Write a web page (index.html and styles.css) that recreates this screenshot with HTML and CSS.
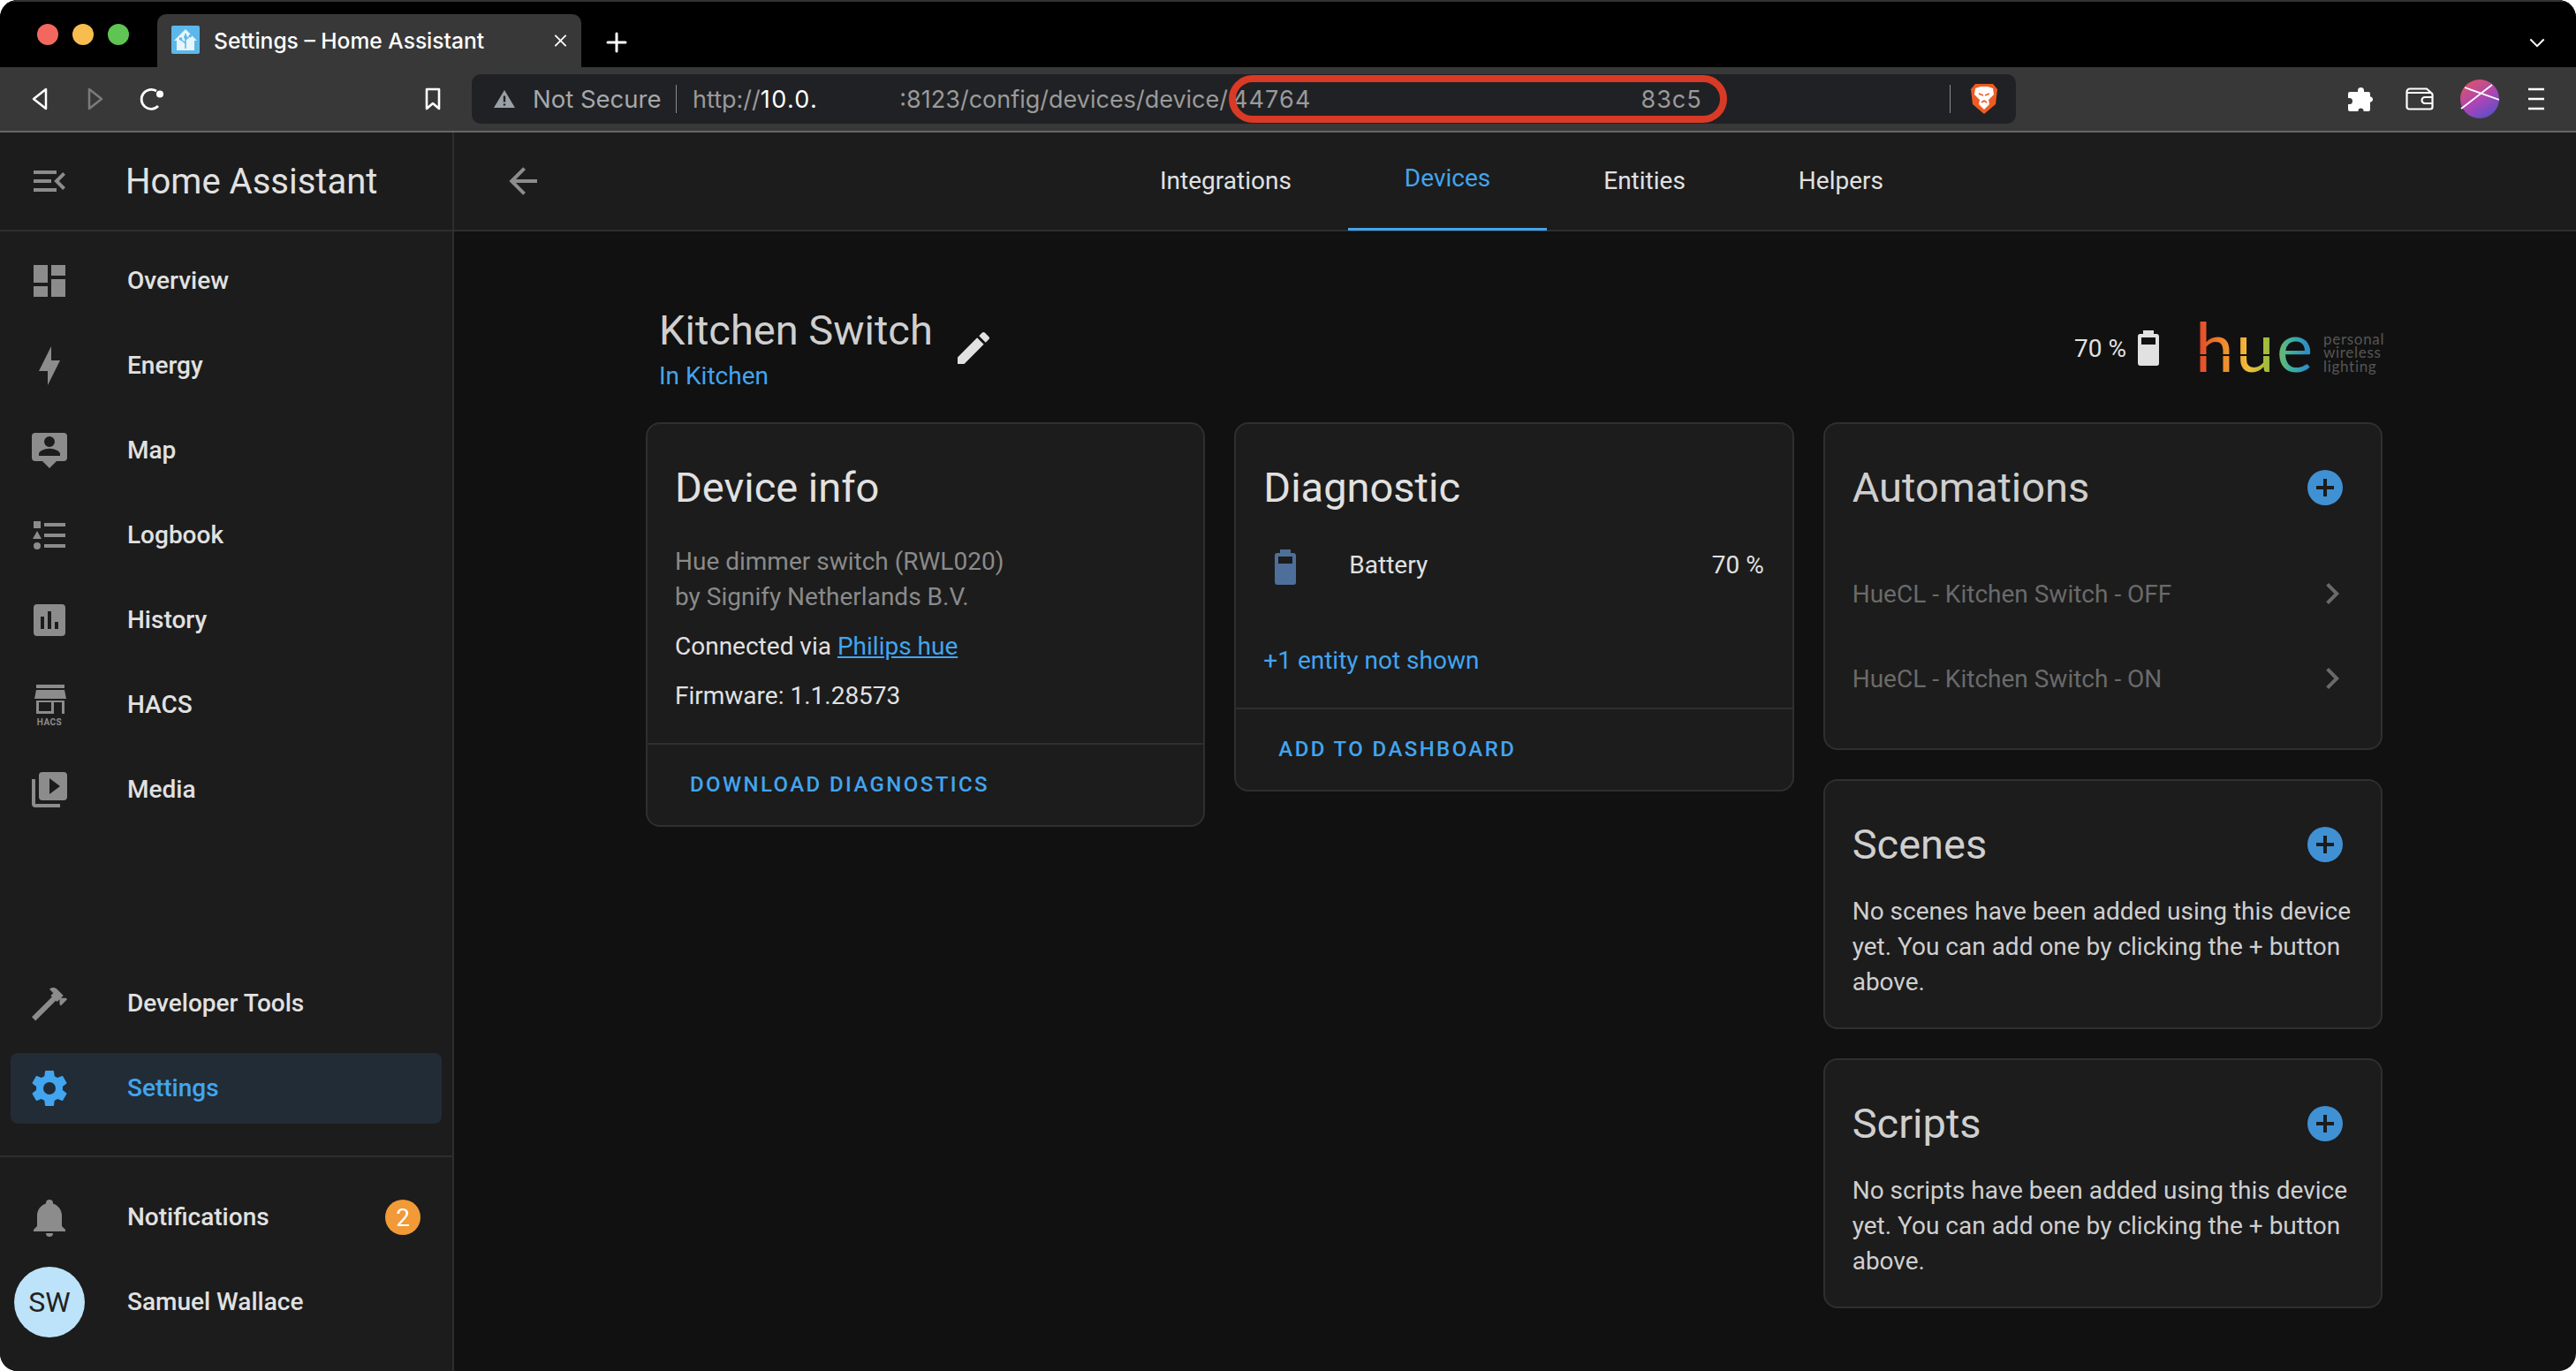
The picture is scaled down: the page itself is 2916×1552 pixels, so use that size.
FILE: index.html
```html
<!DOCTYPE html>
<html lang="en">
<head>
<meta charset="utf-8">
<title>Settings – Home Assistant</title>
<link rel="stylesheet" href="styles.css">
</head>
<body>
<div class="window">
  <div class="tabstrip">
    <div class="lights"><i class="light red"></i><i class="light yellow"></i><i class="light green"></i></div>
    <div class="tab">
      <svg class="favicon" viewBox="0 0 32 32"><rect width="32" height="32" rx="2" fill="#5cb8ea"/><path d="M16 4L29 17h-3v11H6V17H3z" fill="#e8f5fc"/><path d="M16 9v17M16 20l-5-4M16 16l5-4" stroke="#5cb8ea" stroke-width="1.6" fill="none"/><circle cx="16" cy="13" r="2" fill="#5cb8ea"/><circle cx="10.500" cy="15" r="1.800" fill="#5cb8ea"/><circle cx="21.500" cy="11.500" r="1.800" fill="#5cb8ea"/></svg>
      <span class="tab-title">Settings – Home Assistant</span>
      <svg class="tab-close" viewBox="0 0 16 16"><path d="M2 2L14 14M14 2L2 14" stroke="#fff" stroke-width="2" stroke-linecap="round"/></svg>
    </div>
    <svg class="tab-new" viewBox="0 0 24 24"><path d="M12 2V22M2 12H22" stroke="#fff" stroke-width="3" stroke-linecap="round"/></svg>
    <svg class="tab-list" viewBox="0 0 20 12"><path d="M1.500 1.500L10 10L18.500 1.500" stroke="#fff" stroke-width="2.200" fill="none"/></svg>
  </div>

  <div class="toolbar">
    <svg class="tb-back" viewBox="0 0 20 26"><path d="M17 2V24L3 13Z" stroke="#fff" stroke-width="2.500" fill="none" stroke-linejoin="round"/></svg>
    <svg class="tb-forward" viewBox="0 0 20 26"><path d="M3 2V24L17 13Z" stroke="#7b7b7b" stroke-width="2.500" fill="none" stroke-linejoin="round"/></svg>
    <svg class="tb-reload" viewBox="0 0 28 26"><path d="M21 21A11 11 0 1 1 19 4" stroke="#fff" stroke-width="2.800" fill="none"/><path d="M24 11.500A4 4 0 1 0 24 3.500A4 4 0 1 0 24 11.500Z" fill="#fff" transform="translate(-1 0)"/></svg>
    <svg class="tb-bookmark" viewBox="0 0 20 26"><path d="M3 2H17V24L10 18L3 24Z" stroke="#fff" stroke-width="2.600" fill="none" stroke-linejoin="round"/></svg>
    <div class="omnibox">
      <svg class="warn" viewBox="0 0 26 22"><path d="M13 1L25 21H1Z" fill="#9aa0a6"/><path d="M13 7.500V14.500M13 16.500V18.500" stroke="#202124" stroke-width="2.400"/></svg>
      <span class="not-secure">Not Secure</span>
      <i class="omni-sep"></i>
      <span class="url"><span class="url-dim">http://</span><span class="url-host">10.0.</span><span class="url-dim url-port">:8123/config/devices/device/</span><span class="url-dim url-id">44764</span><span class="url-dim url-id2">83c5</span></span>
      <i class="omni-sep omni-sep-right"></i>
      <svg class="brave" viewBox="0 0 32 36"><path d="M6 1H26L31 7L29 24L16 35L3 24L1 7Z" fill="#ee5c25"/><path d="M6 6L12 4H20L26 6L27 13L21 19L22 24L16 30L10 24L11 19L5 13Z" fill="#fff"/><path d="M10 12L15 14M22 12L17 14M13 22L16 20L19 22" stroke="#ee5c25" stroke-width="1.600" fill="none"/></svg>
      <div class="annotation"></div>
    </div>
    <svg class="tb-puzzle" viewBox="0 0 30 28"><path d="M12 6V4.500A3.500 3.500 0 0 1 19 4.500V6H24A2 2 0 0 1 26 8V11.500H27A3.200 3.200 0 0 1 27 17.500H26V26A2 2 0 0 1 24 28H18.500V26.500A3.200 3.200 0 0 0 12.500 26.500V28H3A2 2 0 0 1 1 26V20H2.500A3.500 3.500 0 0 0 2.500 13H1V8A2 2 0 0 1 3 6Z" fill="#fff"/></svg>
    <svg class="tb-wallet" viewBox="0 0 32 26"><path d="M5 1.500H24L29 6A2.500 2.500 0 0 1 30.500 8V22A2.500 2.500 0 0 1 28 24.500H4A2.500 2.500 0 0 1 1.500 22V5A3.500 3.500 0 0 1 5 1.500ZM2 6H28M30 11H22A3.500 3.500 0 0 0 22 18H30" stroke="#fff" stroke-width="2.200" fill="none"/></svg>
    <svg class="tb-avatar" viewBox="0 0 44 44">
      <defs><linearGradient id="avatarGrad" x1="0.200" y1="0" x2="0.800" y2="1"><stop offset="0" stop-color="#dd5468"/><stop offset="0.550" stop-color="#a845b8"/><stop offset="1" stop-color="#5350c8"/></linearGradient></defs>
      <circle cx="22" cy="22" r="22" fill="url(#avatarGrad)"/>
      <path d="M5 9L44 23M36 6L1 33" stroke="#fff" stroke-width="1.800" fill="none"/>
    </svg>
    <svg class="tb-menu" viewBox="0 0 18 26"><path d="M0 2H18M0 13H18M0 24H18" stroke="#fff" stroke-width="2.600"/></svg>
  </div>

  <div class="app">
    <aside class="sidebar">
      <div class="side-head">
        <svg class="icon" viewBox="0 0 24 24"><path d="M21,15.61L19.59,17L14.58,12L19.59,7L21,8.39L17.44,12L21,15.61M3,6H16V8H3V6M3,13V11H13V13H3M3,18V16H16V18H3Z"/></svg>
        <span class="side-title">Home Assistant</span>
      </div>
      <nav class="nav">
        <a class="item"><svg class="icon" viewBox="0 0 24 24"><path d="M13,3V9H21V3M13,21H21V11H13M3,21H11V15H3M3,13H11V3H3V13Z"/></svg><span class="item-label">Overview</span></a>
        <a class="item"><svg class="icon" viewBox="0 0 24 24"><path d="M11 15H6L13 1V9H18L11 23V15Z"/></svg><span class="item-label">Energy</span></a>
        <a class="item"><svg class="icon" viewBox="0 0 24 24"><path fill-rule="evenodd" d="M4 2H20A2 2 0 0 1 22 4V16A2 2 0 0 1 20 18H16L12 22L8 18H4A2 2 0 0 1 2 16V4A2 2 0 0 1 4 2ZM12 4A3 3 0 0 0 9 7A3 3 0 0 0 12 10A3 3 0 0 0 15 7A3 3 0 0 0 12 4ZM18 15V14C18 12 14 10.900 12 10.900C10 10.900 6 12 6 14V15H18Z"/></svg><span class="item-label">Map</span></a>
        <a class="item"><svg class="icon" viewBox="0 0 24 24"><path d="M5,9.5L7.5,14H2.5L5,9.5M3,4H7V8H3V4M5,20A2,2 0 0,0 7,18A2,2 0 0,0 5,16A2,2 0 0,0 3,18A2,2 0 0,0 5,20M9,5V7H21V5H9M9,19H21V17H9V19M9,13H21V11H9V13Z"/></svg><span class="item-label">Logbook</span></a>
        <a class="item"><svg class="icon" viewBox="0 0 24 24"><path d="M19,3H5A2,2 0 0,0 3,5V19A2,2 0 0,0 5,21H19A2,2 0 0,0 21,19V5A2,2 0 0,0 19,3M9,17H7V10H9V17M13,17H11V7H13V17M17,17H15V13H17V17Z"/></svg><span class="item-label">History</span></a>
        <a class="item"><svg class="icon" viewBox="0 0 48 48"><path d="M9 1H41V5H9ZM9 7H41L43 17H7Z"/><path d="M9 19H41V34H38V21H29V34H9ZM12 21V31H26V21Z" fill-rule="evenodd"/><text class="hacs-glyph" x="24" y="47" text-anchor="middle">HACS</text></svg><span class="item-label">HACS</span></a>
        <a class="item"><svg class="icon" viewBox="0 0 24 24"><path fill-rule="evenodd" d="M4,6H2V20A2,2 0 0,0 4,22H18V20H4V6M20,2H8A2,2 0 0,0 6,4V16A2,2 0 0,0 8,18H20A2,2 0 0,0 22,16V4A2,2 0 0,0 20,2M12,14.5V5.5L18,10L12,14.5Z"/></svg><span class="item-label">Media</span></a>
        <div class="nav-spacer"></div>
        <a class="item"><svg class="icon" viewBox="0 0 24 24"><path d="M2 19.63L13.43 8.2L12.72 7.5L14.14 6.07L12 3.89C13.2 2.7 15.09 2.7 16.27 3.89L19.87 7.5L18.45 8.91H21.29L22 9.62L18.45 13.21L17.74 12.5V9.62L16.27 11.04L15.56 10.33L4.13 21.76L2 19.63Z"/></svg><span class="item-label">Developer Tools</span></a>
        <a class="item item-active"><svg class="icon" viewBox="0 0 24 24"><path d="M12,15.5A3.5,3.5 0 0,1 8.5,12A3.5,3.5 0 0,1 12,8.5A3.5,3.5 0 0,1 15.5,12A3.5,3.5 0 0,1 12,15.5M19.43,12.97C19.47,12.65 19.5,12.33 19.5,12C19.5,11.67 19.47,11.34 19.43,11L21.54,9.37C21.73,9.22 21.78,8.95 21.66,8.73L19.66,5.27C19.54,5.05 19.27,4.96 19.05,5.05L16.56,6.05C16.04,5.66 15.5,5.32 14.87,5.07L14.5,2.42C14.46,2.18 14.25,2 14,2H10C9.75,2 9.54,2.18 9.5,2.42L9.13,5.07C8.5,5.32 7.96,5.66 7.44,6.05L4.95,5.05C4.73,4.96 4.46,5.05 4.34,5.27L2.34,8.73C2.21,8.95 2.27,9.22 2.46,9.37L4.57,11C4.53,11.34 4.5,11.67 4.5,12C4.5,12.33 4.53,12.65 4.57,12.97L2.46,14.63C2.27,14.78 2.21,15.05 2.34,15.27L4.34,18.73C4.46,18.95 4.73,19.03 4.95,18.95L7.44,17.94C7.96,18.34 8.5,18.68 9.13,18.93L9.5,21.58C9.54,21.82 9.75,22 10,22H14C14.25,22 14.46,21.82 14.5,21.58L14.87,18.93C15.5,18.67 16.04,18.34 16.56,17.94L19.05,18.95C19.27,19.03 19.54,18.95 19.66,18.73L21.66,15.27C21.78,15.05 21.73,14.78 21.54,14.63L19.43,12.97Z"/></svg><span class="item-label">Settings</span></a>
      </nav>
      <div class="side-foot">
        <a class="item"><svg class="icon" viewBox="0 0 24 24"><path d="M21,19V20H3V19L5,17V11C5,7.9 7.03,5.17 10,4.29C10,4.19 10,4.1 10,4A2,2 0 0,1 12,2A2,2 0 0,1 14,4C14,4.1 14,4.19 14,4.29C16.97,5.17 19,7.9 19,11V17L21,19M14,21A2,2 0 0,1 12,23A2,2 0 0,1 10,21"/></svg><span class="item-label">Notifications</span><span class="badge">2</span></a>
        <a class="item item-user"><span class="user-avatar">SW</span><span class="item-label">Samuel Wallace</span></a>
      </div>
    </aside>

    <main class="main">
      <header class="main-head">
        <svg class="icon back" viewBox="0 0 24 24"><path d="M20,11V13H8L13.5,18.5L12.08,19.92L4.16,12L12.08,4.08L13.5,5.5L8,11H20Z"/></svg>
        <div class="tabs">
          <a class="ha-tab">Integrations</a>
          <a class="ha-tab ha-tab-active">Devices</a>
          <a class="ha-tab">Entities</a>
          <a class="ha-tab">Helpers</a>
        </div>
      </header>
      <div class="content">
        <div class="device-head">
          <div class="device-name">
            <div class="name-block">
              <h1 class="name">Kitchen Switch</h1>
              <a class="area">In Kitchen</a>
            </div>
            <svg class="icon pencil" viewBox="0 0 24 24"><path d="M20.71,7.04C21.1,6.65 21.1,6 20.71,5.63L18.37,3.29C18,2.9 17.35,2.9 16.96,3.29L15.12,5.12L18.87,8.87M3,17.25V21H6.75L17.81,9.93L14.06,6.18L3,17.25Z"/></svg>
          </div>
          <div class="device-side">
            <span class="side-batt">70 %</span>
            <svg class="icon batt-white" viewBox="0 0 24 24"><path fill-rule="evenodd" d="M16,10H8V6H16ZM16.67,4H15V2H9V4H7.33A1.33,1.33 0 0,0 6,5.33V20.67C6,21.4 6.6,22 7.33,22H16.67A1.33,1.33 0 0,0 18,20.67V5.33C18,4.6 17.4,4 16.67,4Z"/></svg>
            <div class="hue">
              <span class="hue-word">hue</span>
              <span class="hue-tag">personal<br>wireless<br>lighting</span>
            </div>
          </div>
        </div>

        <div class="columns">
          <div class="column">
            <section class="card">
              <h2 class="card-title">Device info</h2>
              <div class="info">
                <p class="info-model">Hue dimmer switch (RWL020)<br>by Signify Netherlands B.V.</p>
                <p class="info-line">Connected via <a class="link">Philips hue</a></p>
                <p class="info-line">Firmware: 1.1.28573</p>
              </div>
              <div class="actions"><a class="action">DOWNLOAD DIAGNOSTICS</a></div>
            </section>
          </div>
          <div class="column">
            <section class="card">
              <h2 class="card-title">Diagnostic</h2>
              <div class="entity">
                <svg class="icon batt-blue" viewBox="0 0 24 24"><path fill-rule="evenodd" d="M16,10H8V6H16ZM16.67,4H15V2H9V4H7.33A1.33,1.33 0 0,0 6,5.33V20.67C6,21.4 6.6,22 7.33,22H16.67A1.33,1.33 0 0,0 18,20.67V5.33C18,4.6 17.4,4 16.67,4Z"/></svg>
                <span class="entity-name">Battery</span>
                <span class="entity-value">70 %</span>
              </div>
              <a class="more">+1 entity not shown</a>
              <div class="actions"><a class="action">ADD TO DASHBOARD</a></div>
            </section>
          </div>
          <div class="column">
            <section class="card">
              <div class="title-row">
                <h2 class="card-title card-title-dim">Automations</h2>
                <svg class="icon plus" viewBox="0 0 24 24"><path fill-rule="evenodd" d="M17,13H13V17H11V13H7V11H11V7H13V11H17ZM12,2A10,10 0 0,0 2,12A10,10 0 0,0 12,22A10,10 0 0,0 22,12A10,10 0 0,0 12,2Z"/></svg>
              </div>
              <div class="rows">
                <a class="row"><span>HueCL - Kitchen Switch - OFF</span><svg class="icon chevron" viewBox="0 0 24 24"><path d="M8.59,16.58L13.17,12L8.59,7.41L10,6L16,12L10,18L8.59,16.58Z"/></svg></a>
                <a class="row"><span>HueCL - Kitchen Switch - ON</span><svg class="icon chevron" viewBox="0 0 24 24"><path d="M8.59,16.58L13.17,12L8.59,7.41L10,6L16,12L10,18L8.59,16.58Z"/></svg></a>
              </div>
            </section>
            <section class="card">
              <div class="title-row">
                <h2 class="card-title card-title-dim">Scenes</h2>
                <svg class="icon plus" viewBox="0 0 24 24"><path fill-rule="evenodd" d="M17,13H13V17H11V13H7V11H11V7H13V11H17ZM12,2A10,10 0 0,0 2,12A10,10 0 0,0 12,22A10,10 0 0,0 22,12A10,10 0 0,0 12,2Z"/></svg>
              </div>
              <p class="empty">No scenes have been added using this device yet. You can add one by clicking the + button above.</p>
            </section>
            <section class="card">
              <div class="title-row">
                <h2 class="card-title card-title-dim">Scripts</h2>
                <svg class="icon plus" viewBox="0 0 24 24"><path fill-rule="evenodd" d="M17,13H13V17H11V13H7V11H11V7H13V11H17ZM12,2A10,10 0 0,0 2,12A10,10 0 0,0 12,22A10,10 0 0,0 22,12A10,10 0 0,0 12,2Z"/></svg>
              </div>
              <p class="empty">No scripts have been added using this device yet. You can add one by clicking the + button above.</p>
            </section>
          </div>
        </div>
      </div>
    </main>
  </div>
</div>
</body>
</html>
```
FILE: styles.css
```css
* { box-sizing: border-box; }
html, body { margin: 0; height: 100%; }
body { background: #fff; overflow: hidden; font-family: Roboto, "Liberation Sans", sans-serif; }
h1, h2, p { margin: 0; font-weight: 400; }
svg { display: block; flex: none; }

.window { height: 100vh; display: flex; flex-direction: column; border-radius: 20px; overflow: hidden; background: #111; }

/* browser chrome */
.tabstrip { height: 76px; flex: none; background: #000; border-top: 2px solid #333; display: flex; align-items: flex-end; position: relative; }
.lights { display: flex; gap: 16px; padding-left: 42px; width: 178px; align-self: flex-start; padding-top: 25px; }
.light { width: 24px; height: 24px; border-radius: 50%; display: block; }
.red { background: #f2685f; }
.yellow { background: #f7be4f; }
.green { background: #5fc454; }
.tab { width: 480px; height: 60px; background: #383838; border-radius: 10px 10px 0 0; display: flex; align-items: center; padding: 0 16px; }
.favicon { width: 32px; height: 32px; margin-top: -2px; }
.tab-title { font-family: Inter, Roboto, sans-serif; font-size: 24.600px; font-weight: 500; color: #fff; margin-left: 16px; white-space: nowrap; flex: 1; }
.tab-close { width: 15px; height: 16px; }
.tab-new { width: 24px; height: 24px; margin-left: 28px; align-self: center; margin-top: 17px; }
.tab-list { width: 18px; height: 11px; margin-left: auto; margin-right: 35px; align-self: center; margin-top: 18px; }

.toolbar { height: 74px; flex: none; background: #383838; border-bottom: 2px solid #666; display: flex; align-items: center; }
.tb-back { width: 20px; height: 26px; margin-left: 35px; }
.tb-forward { width: 20px; height: 26px; margin-left: 43px; }
.tb-reload { width: 28px; height: 26px; margin-left: 40px; }
.tb-bookmark { width: 20px; height: 26px; margin-left: 294px; }
.omnibox { width: 1748px; height: 56px; margin-left: 34px; background: #202124; border-radius: 10px; display: flex; align-items: center; position: relative; font-family: Inter, Roboto, sans-serif; font-size: 26px; white-space: nowrap; }
.warn { width: 26px; height: 22px; margin-left: 24px; }
.not-secure { color: #a6a8ab; margin-left: 19px; width: 150px; font-size: 27.500px; }
.omni-sep { width: 1px; height: 32px; background: #8a8a8a; margin-left: 12px; flex: none; }
.url { margin-left: 18px; color: #fff; font-size: 27px; display: flex; }
.url-dim { color: #9a9a9a; }
.url-host { letter-spacing: 1.400px; }
.url-port { margin-left: 92px; }
.url-id { margin-left: 5px; letter-spacing: 1.100px; }
.url-id2 { margin-left: 373px; letter-spacing: 1px; }
.omni-sep-right { position: absolute; left: 1673px; top: 12px; margin: 0; }
.brave { position: absolute; left: 1696px; top: 10px; width: 32px; height: 36px; }
.annotation { position: absolute; left: 857px; top: 1px; width: 564px; height: 54px; border: 8px solid #d93a26; border-radius: 27px / 27px; }
.tb-puzzle { width: 30px; height: 28px; margin-left: 375px; }
.tb-wallet { width: 32px; height: 26px; margin-left: 36px; }
.tb-avatar { width: 44px; height: 44px; margin-left: 30px; }
.tb-menu { width: 18px; height: 26px; margin-left: 33px; }

/* app */
.app { flex: 1; display: flex; min-height: 0; color: #e1e1e1; }
.icon { width: 48px; height: 48px; fill: #8c8c8c; }
.sidebar { width: 514px; flex: none; background: #1c1c1c; border-right: 2px solid #2e2e2e; display: flex; flex-direction: column; }
.side-head { height: 112px; flex: none; border-bottom: 2px solid #2e2e2e; display: flex; align-items: center; padding: 0 0 0 32px; }
.side-title { font-size: 40px; margin-left: 62px; color: #e1e1e1; }
.nav { flex: 1; display: flex; flex-direction: column; gap: 16px; padding: 16px 12px 36px; border-bottom: 2px solid #2e2e2e; }
.nav-spacer { flex: 1; }
.item { height: 80px; flex: none; display: flex; align-items: center; padding: 0 24px 0 20px; border-radius: 8px; }
.item-label { font-size: 28px; font-weight: 500; margin-left: 64px; color: #e1e1e1; flex: 1; margin-top: -2px; }
.item-active { background: #212c36; }
.item-active .icon { fill: #42a5ef; }
.item-active .item-label { color: #42a5ef; }
.hacs-glyph { font: 700 10px Roboto, sans-serif; fill: #8c8c8c; letter-spacing: 0.5px; }
.side-foot { height: 242px; flex: none; padding: 28px 12px 0; display: flex; flex-direction: column; gap: 16px; }
.badge { width: 40px; height: 40px; border-radius: 50%; background: #f19a37; color: #fff; font-size: 28px; display: flex; align-items: center; justify-content: center; }
.item-user { padding-left: 4px; }
.user-avatar { width: 80px; height: 80px; border-radius: 50%; background: #bce3f9; color: #222; font-size: 32px; display: flex; align-items: center; justify-content: center; flex: none; }
.item-user .item-label { margin-left: 48px; }

.main { flex: 1; min-width: 0; display: flex; flex-direction: column; }
.main-head { height: 112px; flex: none; background: #1c1c1c; border-bottom: 2px solid #2e2e2e; display: flex; align-items: center; padding-left: 54px; }
.tabs { display: flex; height: 110px; margin-left: 633px; }
.ha-tab { font-size: 28px; padding: 0 64px; display: flex; align-items: center; border-bottom: 3px solid transparent; color: #e1e1e1; margin-bottom: -1px; }
.ha-tab-active { color: #42a5ef; border-bottom-color: #42a5ef; padding-bottom: 5px; }

.content { padding: 80px 0 0 217px; width: 2183px; }
.device-head { display: flex; justify-content: space-between; align-items: center; height: 104px; margin-bottom: 32px; }
.device-name { display: flex; align-items: center; padding-left: 15px; }
.name-block { display: flex; flex-direction: column; }
.name { font-size: 47px; line-height: 64px; color: #cfcfcf; }
.area { font-size: 28px; line-height: 40px; color: #42a5ef; }
.pencil { margin-left: 22px; fill: #e1e1e1; }
.device-side { display: flex; align-items: center; }
.side-batt { font-size: 28px; margin-right: 1px; }
.batt-white { fill: #e1e1e1; }
.hue { display: flex; align-items: center; margin-left: 29px; width: 212px; }
.hue-word { font-family: Lato, Roboto, sans-serif; font-size: 78px; line-height: 60px; padding-bottom: 6px; letter-spacing: 2.500px; width: 145px; flex: none; position: relative; background: linear-gradient(90deg, #e0402a 0%, #ee8a2c 22%, #f2bd3a 42%, #9dbb3c 57%, #3fb39c 74%, #2f8fc4 87%); -webkit-background-clip: text; background-clip: text; color: transparent; }
.hue-word::after { content: ""; position: absolute; left: 0; top: 40px; width: 84px; height: 2px; background: #111; }
.hue-tag { font-family: Lato, Roboto, sans-serif; font-size: 17px; line-height: 15.500px; letter-spacing: 0.700px; color: #565656; margin-top: 10px; }

.columns { display: grid; grid-template-columns: repeat(3, 1fr); gap: 33px; width: 1966px; }
.column { display: flex; flex-direction: column; gap: 33px; min-width: 0; }
.card { background: #1c1c1c; border: 2px solid #2f2f2f; border-radius: 16px; padding-top: 40px; display: flex; flex-direction: column; }
.card-title { font-size: 47px; line-height: 64px; padding-left: 31px; color: #e1e1e1; }
.card-title-dim { color: #cfcfcf; }
.info { padding: 32px 31px 33px; font-size: 28px; line-height: 40px; display: flex; flex-direction: column; gap: 16px; }
.info-model { color: #8a8a8a; }
.link { color: #42a5ef; text-decoration: underline; }
.actions { height: 93px; border-top: 2px solid #2f2f2f; display: flex; align-items: center; padding-left: 48px; }
.action { font-size: 24px; font-weight: 500; letter-spacing: 2.400px; color: #42a5ef; margin-top: -2px; }
.entity { height: 96px; margin-top: 10px; display: flex; align-items: center; padding: 0 32px; font-size: 28px; }
.batt-blue { fill: #4e6f9a; }
.entity-name { margin-left: 48px; flex: 1; margin-top: -6px; }
.entity-value { margin-top: -6px; }
.more { font-size: 28px; line-height: 40px; color: #42a5ef; padding-left: 31px; margin: 38px 0 33px; }
.title-row { display: flex; justify-content: space-between; align-items: center; padding-right: 39px; }
.plus { fill: #4090d4; }
.rows { padding: 40px 0 31px; }
.row { height: 96px; display: flex; align-items: center; justify-content: space-between; padding: 0 31px; font-size: 28px; color: #6a6a6a; }
.chevron { fill: #6a6a6a; }
.empty { padding: 24px 31px 31px; font-size: 28px; line-height: 40px; color: #cfcfcf; }
```
